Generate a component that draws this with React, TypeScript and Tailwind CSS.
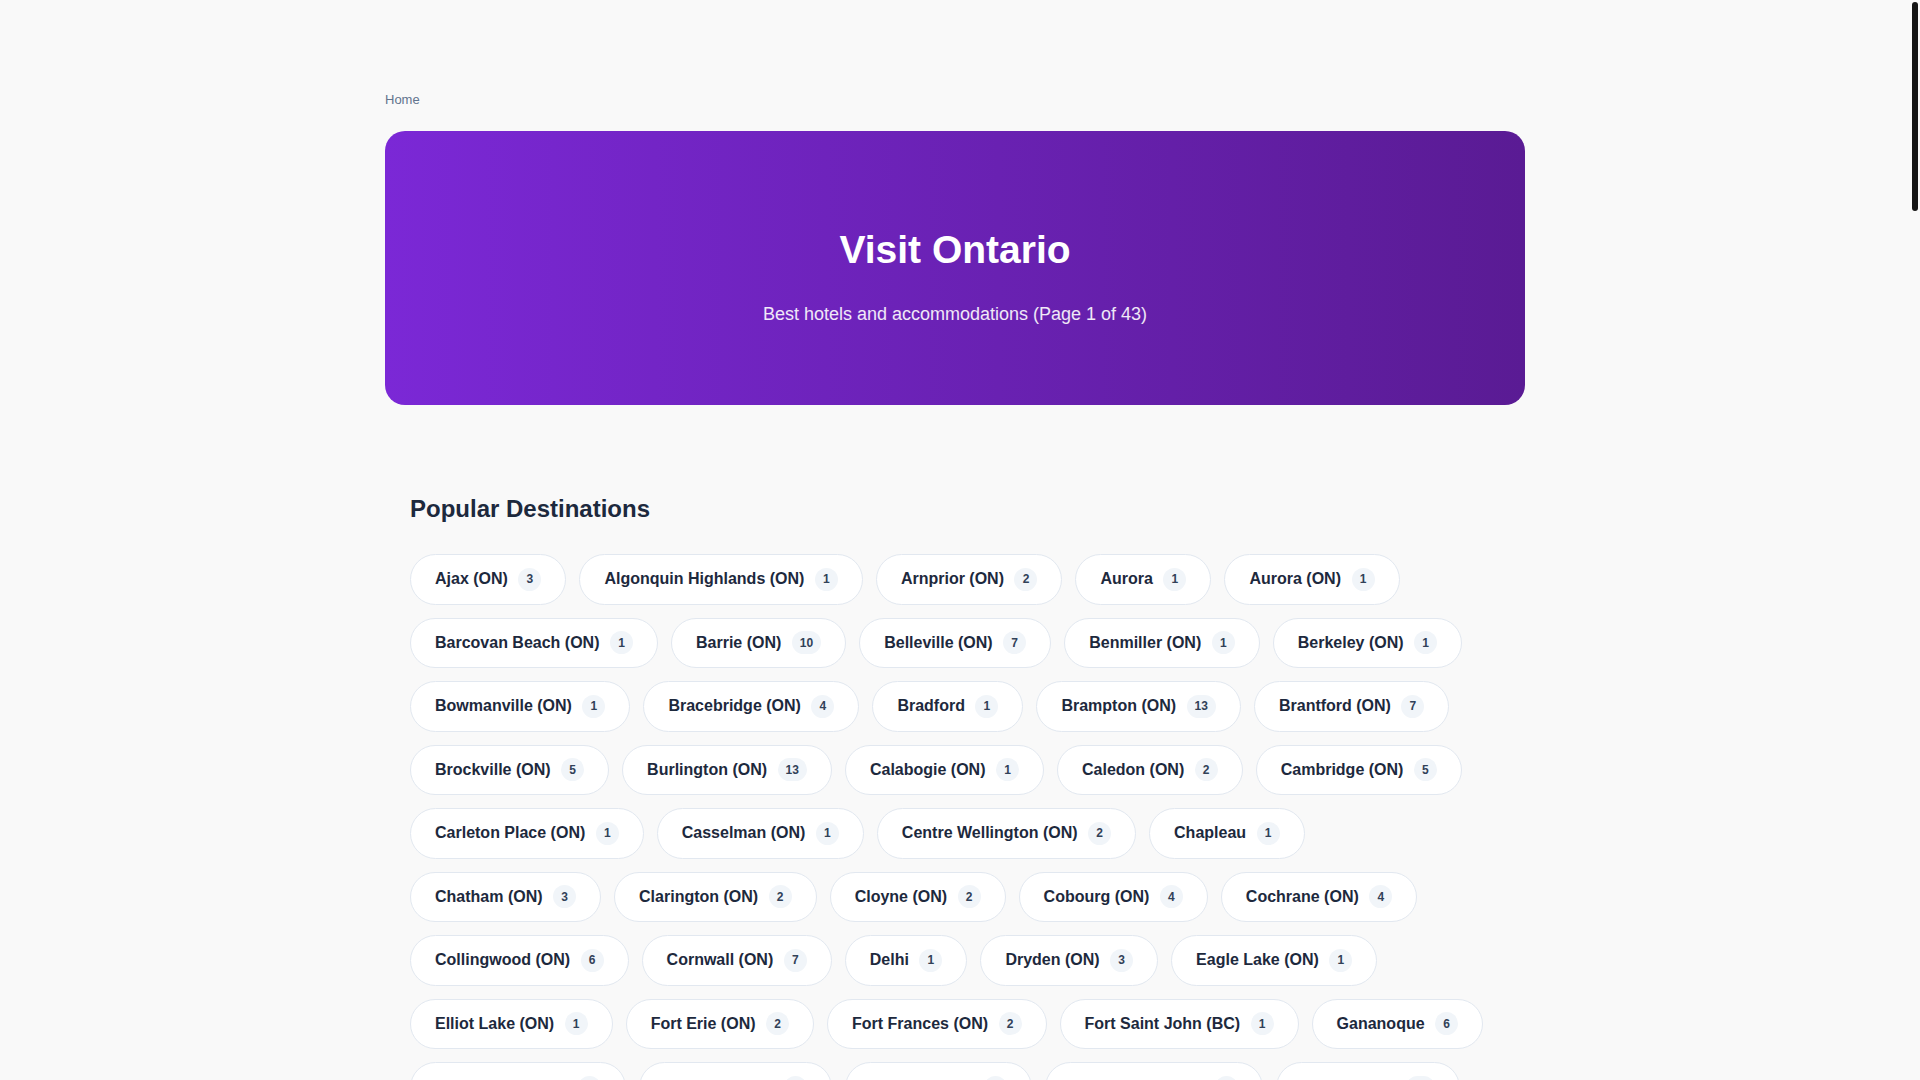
import React from "react";

const DESTINATIONS: [string, number][] = [
  ["Ajax (ON)", 3],
  ["Algonquin Highlands (ON)", 1],
  ["Arnprior (ON)", 2],
  ["Aurora", 1],
  ["Aurora (ON)", 1],
  ["Barcovan Beach (ON)", 1],
  ["Barrie (ON)", 10],
  ["Belleville (ON)", 7],
  ["Benmiller (ON)", 1],
  ["Berkeley (ON)", 1],
  ["Bowmanville (ON)", 1],
  ["Bracebridge (ON)", 4],
  ["Bradford", 1],
  ["Brampton (ON)", 13],
  ["Brantford (ON)", 7],
  ["Brockville (ON)", 5],
  ["Burlington (ON)", 13],
  ["Calabogie (ON)", 1],
  ["Caledon (ON)", 2],
  ["Cambridge (ON)", 5],
  ["Carleton Place (ON)", 1],
  ["Casselman (ON)", 1],
  ["Centre Wellington (ON)", 2],
  ["Chapleau", 1],
  ["Chatham (ON)", 3],
  ["Clarington (ON)", 2],
  ["Cloyne (ON)", 2],
  ["Cobourg (ON)", 4],
  ["Cochrane (ON)", 4],
  ["Collingwood (ON)", 6],
  ["Cornwall (ON)", 7],
  ["Delhi", 1],
  ["Dryden (ON)", 3],
  ["Eagle Lake (ON)", 1],
  ["Elliot Lake (ON)", 1],
  ["Fort Erie (ON)", 2],
  ["Fort Frances (ON)", 2],
  ["Fort Saint John (BC)", 1],
  ["Gananoque", 6],
  ["Georgetown (ON)", 2],
  ["Goderich (ON)", 3],
  ["Grimsby (ON)", 2],
  ["Gravenhurst (ON)", 5],
  ["Guelph (ON)", 12],
  ["Haliburton (ON)", 2],
  ["Hamilton (ON)", 18],
  ["Hanover (ON)", 1],
  ["Huntsville (ON)", 6],
  ["Kapuskasing (ON)", 2],
];

const KINDS = [
  "Inn & Suites",
  "Lakeside Lodge",
  "Grand Hotel",
  "Motor Inn",
  "Boutique Hotel",
  "Country Resort",
];

const HOTELS = DESTINATIONS.slice(0, 30).map(([town], i) => {
  const place = town.replace(" (ON)", "").replace(" (BC)", "");
  return {
    name: `${place} ${KINDS[i % KINDS.length]}`,
    place: town,
    rating: (7.4 + ((i * 7) % 25) / 10).toFixed(1),
    reviews: 40 + ((i * 37) % 260),
    price: 99 + ((i * 23) % 180),
  };
});

export default function App() {
  return (
    <div className="flex h-screen bg-[#f9f9f9] font-['Liberation_Sans',Arial,sans-serif] text-slate-800">
      <main className="flex-1 overflow-y-auto [scrollbar-width:none]">
        <div className="mx-auto w-[1140px] pt-[90px]">
          {/* Breadcrumb */}
          <nav className="text-[13px] leading-5 text-slate-500">Home</nav>

          {/* Hero */}
          <header className="mt-[21px] rounded-[20px] bg-linear-to-r from-[#7b28d6] to-[#5a1b94] pt-[95px] pb-[77px] text-center text-white">
            <h1 className="text-[39px] font-bold leading-[48px]">Visit Ontario</h1>
            <p className="mt-[26px] text-lg leading-7 text-white/90">
              Best hotels and accommodations (Page 1 of 43)
            </p>
          </header>

          {/* Destinations */}
          <section className="mt-16 px-[25px] pt-6">
            <h2 className="mb-[29px] text-2xl font-bold leading-8 text-slate-800">
              Popular Destinations
            </h2>
            <div className="flex flex-wrap gap-x-[13px] gap-y-[13px]">
              {DESTINATIONS.map(([name, count]) => (
                <a
                  key={name}
                  className="flex h-[50.5px] items-center gap-[10.5px] rounded-full border border-slate-200 bg-white px-6 text-base font-bold text-slate-800"
                >
                  <span>{name}</span>
                  <span className="inline-flex h-[23px] min-w-[23px] items-center justify-center rounded-full bg-slate-100 px-2 text-xs font-semibold text-slate-700">
                    {count}
                  </span>
                </a>
              ))}
            </div>
          </section>

          {/* Hotels */}
          <section className="mt-16 px-[25px]">
            <h2 className="mb-[29px] text-2xl font-bold leading-8 text-slate-800">
              Hotels in Ontario
            </h2>
            <div className="grid grid-cols-3 gap-6">
              {HOTELS.map((h) => (
                <article
                  key={h.name}
                  className="flex h-[360px] flex-col overflow-hidden rounded-2xl border border-slate-200 bg-white"
                >
                  <div className="h-[190px] bg-linear-to-br from-[#ede9fe] to-[#c4b5fd]" />
                  <div className="flex flex-1 flex-col gap-2 p-5">
                    <h3 className="text-lg font-bold text-slate-800">{h.name}</h3>
                    <p className="text-sm text-slate-500">{h.place}</p>
                    <div className="mt-auto flex items-center justify-between">
                      <div className="flex items-center gap-2 text-sm">
                        <span className="rounded-md bg-[#6b21a8] px-2 py-0.5 font-bold text-white">{h.rating}</span>
                        <span className="text-slate-500">{h.reviews} reviews</span>
                      </div>
                      <span className="text-base font-bold text-slate-800">from ${h.price}</span>
                    </div>
                  </div>
                </article>
              ))}
            </div>
          </section>

          <footer className="mt-16 border-t border-slate-200 py-10 text-center text-sm text-slate-500">
            © Visit Ontario · Hotels and accommodations
          </footer>
        </div>
      </main>

      {/* Scrollbar track */}
      <aside className="w-[10px] shrink-0 pt-[2px] pl-[2px]">
        <div className="h-[209px] w-[6px] rounded-full bg-[#151515]" />
      </aside>
    </div>
  );
}
